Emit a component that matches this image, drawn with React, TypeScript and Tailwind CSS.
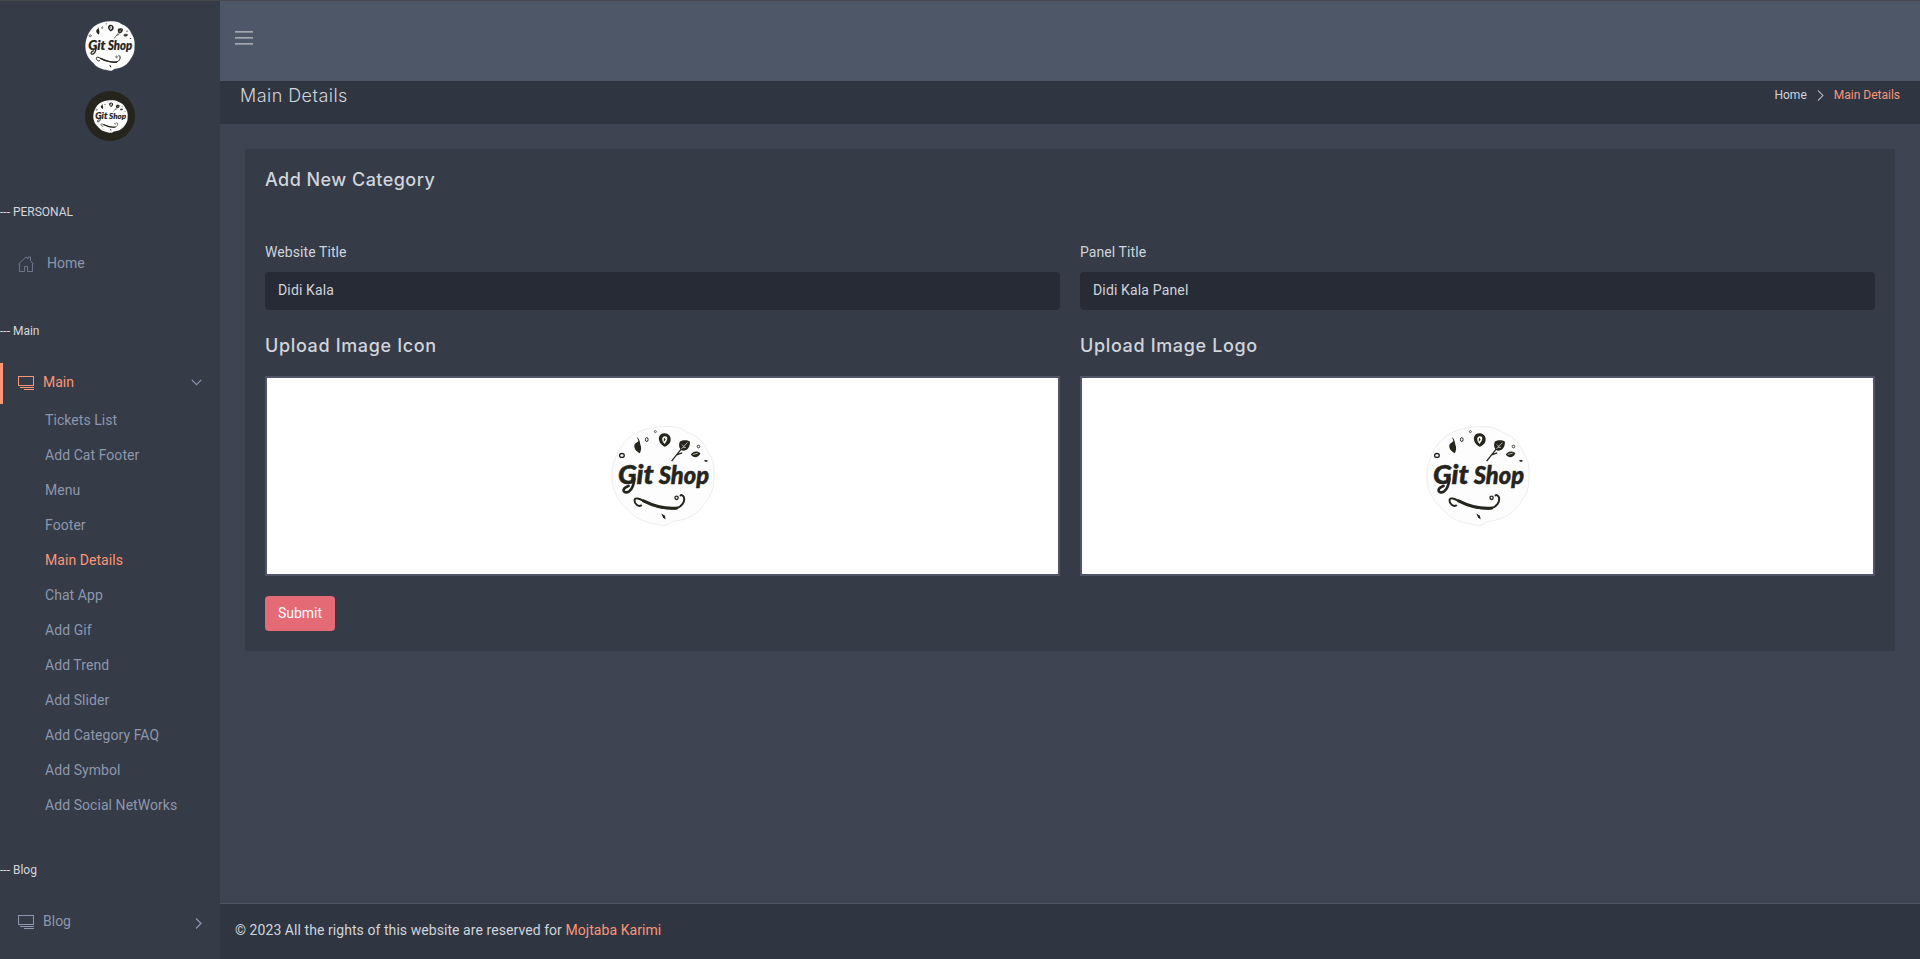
import React from "react";

const subItems = [
  "Tickets List",
  "Add Cat Footer",
  "Menu",
  "Footer",
  "Main Details",
  "Chat App",
  "Add Gif",
  "Add Trend",
  "Add Slider",
  "Add Category FAQ",
  "Add Symbol",
  "Add Social NetWorks",
];

function Logo({ className, outline }: { className: string; outline?: boolean }) {
  return (
    <svg viewBox="92 76 314 302" preserveAspectRatio="none" className={className} fill="#25241d">
      <path
        d="M247 78C285 76 305 82 322 95C350 104 372 122 383 151C404 180 405 205 402 240C404 270 388 293 368 320C343 350 315 360 278 364C260 381 243 377 222 371C190 366 160 351 145 330C120 308 101 284 96 246C91 205 102 177 117 147C136 115 160 98 191 88C210 81 228 79 247 78Z"
        fill="#fdfdfd"
        stroke={outline ? "#e4e4e4" : "#fdfdfd"}
        strokeWidth={outline ? 2 : 1}
      />
      <path d="M170 109C177 115 180 123 180 130C185 140 183 150 179 158C168 153 160 144 163 132C166 127 171 125 175 121Z" />
      <ellipse cx="200" cy="117" rx="4" ry="6" fill="none" stroke="#25241d" strokeWidth="3" />
      <circle cx="226" cy="93" r="3" fill="none" stroke="#25241d" strokeWidth="2" />
      <ellipse cx="125" cy="165" rx="7" ry="6" fill="none" stroke="#25241d" strokeWidth="4" />
      <path fillRule="evenodd" d="M254 98C270 99 275 113 271 124C267 132 260 136 254 139C243 133 234 121 237 109C240 101 246 98 254 98ZM254 107C246 108 245 117 249 124L254 130C261 123 265 112 259 108Z" />
      <path d="M252 111L257 117L251 124Z" />
      <path d="M300 123C310 117 323 119 330 123C332 138 323 151 309 151C298 148 295 134 300 123Z" />
      <path d="M322 127L302 148L275 182M290 163L307 157" fill="none" stroke="#25241d" strokeWidth="4" />
      <path d="M323 126L305 145M306 132L312 138M318 141L310 140" fill="none" stroke="#fdfdfd" strokeWidth="2" />
      <path d="M333 162C340 152 353 150 362 159C356 171 342 175 333 162Z" />
      <path d="M339 162L354 158" stroke="#fdfdfd" strokeWidth="2" />
      <circle cx="356" cy="138" r="4" fill="none" stroke="#25241d" strokeWidth="2.5" />
      <path d="M372 181L379 178L385 182L379 185Z" />
      <text x="113" y="252" fontFamily="Lato, sans-serif" fontWeight="900" fontStyle="italic" fontSize="82" stroke="#25241d" strokeWidth="1.5" textLength="108" lengthAdjust="spacingAndGlyphs">
        Git
      </text>
      <text x="236" y="251" fontFamily="Lato, sans-serif" fontWeight="900" fontStyle="italic" fontSize="76" stroke="#25241d" strokeWidth="1.5" textLength="152" lengthAdjust="spacingAndGlyphs">
        Shop
      </text>
      <path d="M163 234C160 263 148 279 135 276C126 273 129 262 145 257" fill="none" stroke="#25241d" strokeWidth="8" strokeLinecap="round" />
      <path d="M183 316C174 321 163 311 163 301C164 290 178 295 190 302C220 317 257 327 287 325C307 321 316 303 312 291C310 286 304 283 302 286" fill="none" stroke="#25241d" strokeWidth="6" strokeLinecap="round" />
      <path d="M190 302C220 317 257 327 290 324" fill="none" stroke="#25241d" strokeWidth="9" strokeLinecap="round" />
      <circle cx="290" cy="293" r="5" fill="none" stroke="#25241d" strokeWidth="4" />
      <path d="M244 340L255 347L257 358L249 352Z" />
    </svg>
  );
}

function MonitorIcon({ className }: { className: string }) {
  return (
    <svg viewBox="0 0 16 16" className={className} fill="currentColor" shapeRendering="crispEdges">
      <path fillRule="evenodd" d="M0 1H16V11H0ZM1 2V10H15V2Z" />
      <path d="M2 12H16V13H2ZM6 14H16V15H6Z" />
    </svg>
  );
}

function HomeIcon() {
  return (
    <svg viewBox="0 0 16 16" className="mt-px h-4 w-4" fill="none" stroke="currentColor" strokeOpacity="0.8" strokeWidth="0.8">
      <path d="M0.4 8.2L8 0.9L10 2.7V1H12.5V4.8L15.7 8.2M1.5 7.5V15.5H6.5V10.5H9.5V15.5H14.5V7.5" />
    </svg>
  );
}

function SectionLabel({ children, className }: { children: React.ReactNode; className: string }) {
  return <div className={`h-5 text-xs leading-5 text-[#d3d7de] ${className}`}>--- {children}</div>;
}

function Field({ label, value }: { label: string; value: string }) {
  return (
    <label className="block">
      <span className="block h-5 text-sm leading-5 tracking-[0.08px]">{label}</span>
      <input
        type="text"
        defaultValue={value}
        className="mt-[10px] block h-[38px] w-full rounded bg-[#272b36] px-[13px] pb-0.5 text-sm tracking-[0.15px] outline-none"
      />
    </label>
  );
}

function Upload({ title }: { title: string }) {
  return (
    <section>
      <h4 className="h-6 font-[Inter,sans-serif] text-[18px] leading-6 font-medium tracking-[0.64px]">{title}</h4>
      <div className="mt-[18px] flex h-[200px] items-center justify-center border-2 border-[#4f5467] bg-white">
        <Logo className="h-[100px] w-[104px]" outline />
      </div>
    </section>
  );
}

export default function App() {
  return (
    <div className="flex h-[959px] w-full overflow-hidden border-t border-[#45494e] bg-[#3e4451] font-[Roboto,sans-serif] text-sm text-[#d0d4db]">
      <aside className="w-[220px] shrink-0 bg-[#353b47] text-[#8d97ad]">
        <div className="flex flex-col items-center gap-5 pt-5">
          <Logo className="h-[50px] w-[50px]" />
          <div className="flex h-[50px] w-[50px] items-center justify-center rounded-full bg-[#25241d]">
            <Logo className="h-[33px] w-[35px]" />
          </div>
        </div>
        <nav>
          <SectionLabel className="mt-[61px]">PERSONAL</SectionLabel>
          <a className="mt-[21px] flex h-[41px] items-center pl-[18px]">
            <HomeIcon />
            <span className="ml-[13px] pb-0.5">Home</span>
          </a>
          <SectionLabel className="mt-[37px]">Main</SectionLabel>
          <a className="mt-[22px] flex h-[41px] items-center border-l-[3px] border-[#fb9678] pr-[18px] pl-[15px] text-[#fb9678]">
            <MonitorIcon className="mb-px h-4 w-4" />
            <span className="ml-[9px] flex-1 pb-1">Main</span>
            <svg viewBox="0 0 11 7" className="mb-[2px] h-[7px] w-[11px] text-[#8d97ad]" fill="none" stroke="currentColor" strokeWidth="1.2">
              <path d="M0.8 0.8L5.5 5.7L10.2 0.8" />
            </svg>
          </a>
          <ul className="-mt-px pl-[45px] tracking-[0.06px]">
            {subItems.map((item) => (
              <li key={item} className={`h-[35px] leading-[35px] ${item === "Main Details" ? "text-[#fb9678]" : ""}`}>
                {item}
              </li>
            ))}
          </ul>
          <SectionLabel className="mt-[37px]">Blog</SectionLabel>
          <a className="mt-[21px] flex h-[41px] items-center pr-[18px] pl-[18px]">
            <MonitorIcon className="mt-px h-4 w-4" />
            <span className="ml-[9px] flex-1 pb-0.5">Blog</span>
            <svg viewBox="0 0 7 11" className="mt-[3px] h-[11px] w-[7px]" fill="none" stroke="currentColor" strokeWidth="1.2">
              <path d="M1 0.5L6 5.5L1 10.5" />
            </svg>
          </a>
        </nav>
      </aside>

      <div className="flex min-w-0 flex-1 flex-col">
        <header className="h-20 bg-[#4e5767] pt-[30px] pl-[15px]">
          <svg viewBox="0 0 18 14" className="h-[14px] w-[18px]" fill="none" stroke="#c0c4ca" strokeWidth="1.2">
            <path d="M0 0.9H18M0 6.9H18M0 12.9H18" />
          </svg>
        </header>
        <div className="flex h-[43px] justify-between bg-[#2f3541] px-5">
          <h3 className="font-[Inter,sans-serif] text-[18px] leading-[29px] font-light tracking-[0.45px]">Main Details</h3>
          <div className="flex h-7 items-center text-xs">
            <span>Home</span>
            <svg viewBox="0 0 7 11" className="mr-2.5 ml-[10px] h-[11px] w-[7px]" fill="none" stroke="#a8acb4" strokeWidth="1.1">
              <path d="M1 0.5L6 5.5L1 10.5" />
            </svg>
            <span className="text-[#fb9678]">Main Details</span>
          </div>
        </div>

        <main className="flex-1 p-[25px]">
          <form className="h-[502px] bg-[#353b47] px-5 pt-[19px]">
            <h4 className="h-6 font-[Inter,sans-serif] text-[18px] leading-6 font-medium tracking-[0.46px]">Add New Category</h4>
            <div className="mt-[50px] grid grid-cols-2 gap-x-5">
              <Field label="Website Title" value="Didi Kala" />
              <Field label="Panel Title" value="Didi Kala Panel" />
            </div>
            <div className="mt-6 grid grid-cols-2 gap-x-5">
              <Upload title="Upload Image Icon" />
              <Upload title="Upload Image Logo" />
            </div>
            <button type="button" className="mt-5 block h-[35px] w-[70px] rounded bg-[#e46a76] pb-px text-sm text-white">
              Submit
            </button>
          </form>
        </main>

        <footer className="h-14 border-t border-[#4f5467] bg-[#2f3541] pl-[15px] leading-[52px] tracking-[0.065px]">
          © 2023 All the rights of this website are reserved for <a className="text-[#fb9678]">Mojtaba Karimi</a>
        </footer>
      </div>
    </div>
  );
}
